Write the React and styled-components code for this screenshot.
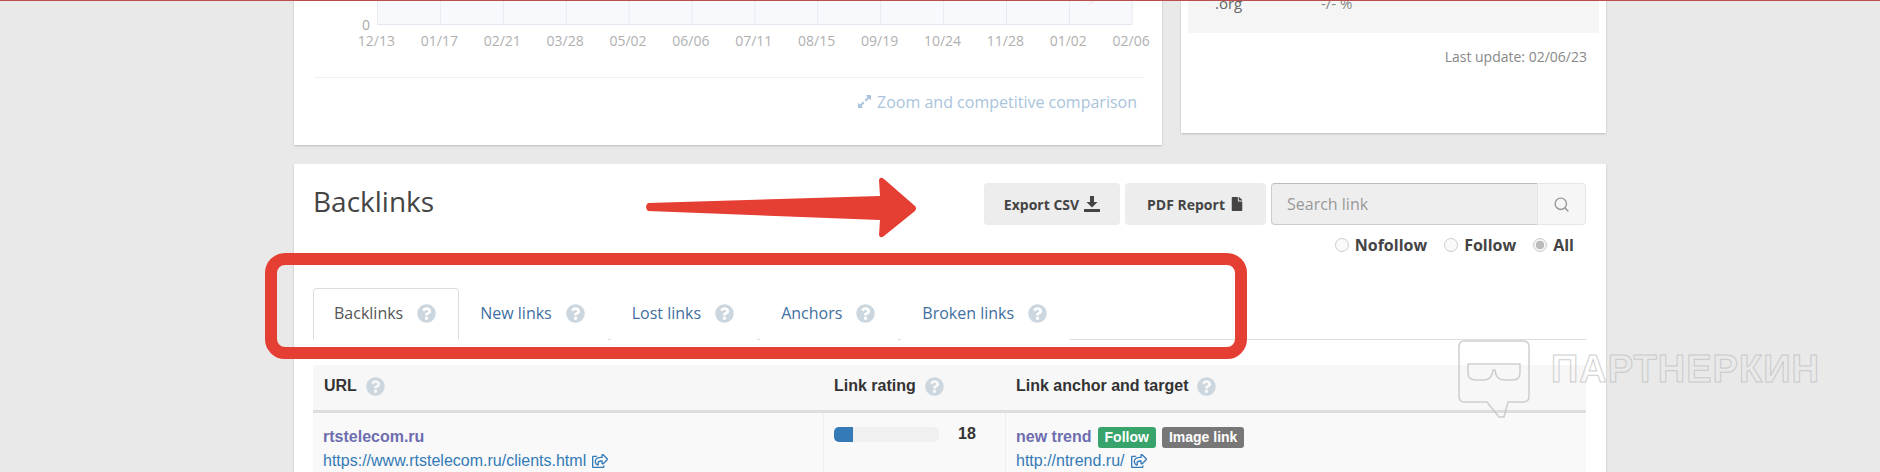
import React from 'react'
import styled, { createGlobalStyle } from 'styled-components'
import { FaQuestionCircle, FaRegShareSquare, FaFile, FaExpandAlt } from 'react-icons/fa'
import { Search } from 'lucide-react'

const GlobalStyle = createGlobalStyle`
    html, body {
        margin: 0;
        padding: 0;
        background: #e9e9e9;
    }
    * { box-sizing: border-box; }
`

const Page = styled.div`
    position: relative;
    width: 1880px;
    height: 472px;
    overflow: hidden;
    padding-left: 294px;
    font-family: "Open Sans", sans-serif;
`
const TopLine = styled.div`
    position: absolute;
    top: 0;
    left: 0;
    right: 0;
    height: 1px;
    background: #b95050;
`
const TopRow = styled.div`
    display: flex;
    align-items: flex-start;
    gap: 19px;
    width: 1312px;
    height: 164px;
`
const Card = styled.div`
    background: #fff;
    box-shadow: 0 1px 2px rgba(0, 0, 0, 0.2);
`
const ChartCard = styled(Card)`
    width: 868px;
    height: 145px;
    padding: 0 18px 0 20px;
`
const ChartRow = styled.div`
    display: flex;
    align-items: flex-end;
    height: 25px;
    padding-left: 48px;
`
const AxisZero = styled.span`
    width: 15px;
    font-size: 14px;
    line-height: 18px;
    margin-bottom: -9px;
    color: #aaa;
`
const DateRow = styled.div`
    display: flex;
    padding-left: 31px;
    margin-top: 6px;
`
const DateLabel = styled.span`
    flex: 0 0 62.9px;
    text-align: center;
    font-size: 14px;
    line-height: 20px;
    color: #b0b0b0;
    white-space: nowrap;
`
const ChartFooter = styled.div`
    display: flex;
    align-items: center;
    justify-content: flex-end;
    gap: 5px;
    height: 48px;
    margin-top: 26px;
    padding-right: 7px;
    border-top: 1px solid #f1f1f1;
    font-size: 16px;
    color: #a9c4dc;
`
const SideCard = styled(Card)`
    width: 425px;
    height: 133px;
    padding: 0 7px;
`
const ZoneBox = styled.div`
    display: flex;
    height: 33px;
    padding-left: 27px;
    overflow: hidden;
    background: #f5f5f5;
    font-size: 15px;
    line-height: 20px;
    color: #666;
`
const ZoneName = styled.span`
    width: 106px;
    margin-top: -7px;
`
const ZoneValue = styled.span`
    margin-top: -7px;
    color: #888;
`
const LastUpdate = styled.div`
    margin-top: 14px;
    padding-right: 12px;
    text-align: right;
    font-size: 14px;
    line-height: 20px;
    color: #888;
`
const MainCard = styled(Card)`
    width: 1312px;
    height: 320px;
    padding: 19px 20px 0 19px;
`
const Header = styled.div`
    display: flex;
    justify-content: space-between;
    height: 105px;
`
const Title = styled.h2`
    margin: 0;
    font-size: 28px;
    font-weight: 400;
    line-height: 36px;
    color: #444;
`
const Controls = styled.div`
    display: flex;
    flex-direction: column;
    align-items: flex-end;
`
const ButtonRow = styled.div`
    display: flex;
    gap: 5px;
`
const ActionButton = styled.button`
    display: flex;
    align-items: center;
    justify-content: center;
    gap: 5px;
    width: ${p => p.$width}px;
    height: 42px;
    padding: 0;
    border: 0;
    border-radius: 4px;
    background: #ededed;
    font-family: inherit;
    font-size: 14px;
    font-weight: 700;
    color: #444;
`
const SearchBox = styled.div`
    display: flex;
    height: 42px;
`
const SearchInput = styled.input`
    width: 266px;
    height: 42px;
    padding: 0 15px;
    border: 1px solid #ccc;
    border-top-color: #bbb;
    border-right: 0;
    border-radius: 4px 0 0 4px;
    background: #eee;
    font-family: inherit;
    font-size: 16px;
    &::placeholder { color: #999; opacity: 1; }
`
const SearchAddon = styled.div`
    display: flex;
    align-items: center;
    justify-content: center;
    width: 49px;
    border: 1px solid #e6e6e6;
    border-radius: 0 4px 4px 0;
    background: #f6f6f6;
    color: #999;
`
const RadioRow = styled.div`
    display: flex;
    gap: 17px;
    height: 24px;
    margin-top: 8px;
    padding-right: 12px;
`
const RadioLabel = styled.label`
    display: flex;
    align-items: center;
    gap: 6px;
    font-size: 16px;
    font-weight: 700;
    color: #444;
`
const Radio = styled.input.attrs({ type: 'radio' })`
    appearance: none;
    position: relative;
    width: 14px;
    height: 14px;
    margin: 0;
    border: 1px solid #ccc;
    border-radius: 50%;
    background: #fafafa;
    &:checked { background: radial-gradient(circle, #bbb 0 4px, #f4f4f4 4.5px); }
`
const Tabs = styled.div`
    display: flex;
    height: 52px;
    border-bottom: 1px solid #ddd;
`
const Tab = styled.div`
    display: flex;
    align-items: center;
    gap: 14px;
    height: 52px;
    padding: 0 22px 2px 20px;
    border: 1px solid ${p => (p.$active ? '#ddd' : 'transparent')};
    border-bottom-color: ${p => (p.$active ? '#fff' : 'transparent')};
    border-radius: 4px 4px 0 0;
    margin-right: ${p => (p.$active ? 0 : 3)}px;
    font-size: 16px;
    color: ${p => (p.$active ? '#555' : '#3f6f9f')};
    background: #fff;
`
const Help = styled(FaQuestionCircle)`
    flex: none;
    font-size: 19px;
    color: #ccd6de;
`
const Table = styled.div`
    margin-top: 25px;
    font-family: "Liberation Sans", Arial, sans-serif;
    font-size: 16px;
`
const TableRow = styled.div`
    display: grid;
    grid-template-columns: 510px 182px 581px;
`
const HeadCell = styled.div`
    display: flex;
    align-items: center;
    gap: 9px;
    height: 48px;
    padding: 0 11px 3px 11px;
    border-bottom: 3px solid #ddd;
    background: #f7f7f7;
    font-weight: 700;
    color: #333;
`
const BodyCell = styled.div`
    height: 70px;
    padding: 12px 10px 0 10px;
    background: #f9f9f9;
    border-left: ${p => (p.$first ? '0' : '1px solid #eee')};
`
const LinkTitle = styled.div`
    display: flex;
    align-items: center;
    gap: 6px;
    height: 24px;
    font-weight: 700;
    color: #6d6db0;
`
const LinkUrl = styled.div`
    display: flex;
    align-items: center;
    gap: 6px;
    height: 24px;
    color: #337ab7;
`
const RatingRow = styled.div`
    display: flex;
    align-items: center;
    gap: 19px;
    font-weight: 700;
    color: #333;
`
const RatingTrack = styled.div`
    width: 105px;
    height: 15px;
    overflow: hidden;
    border-radius: 5px;
    background: #f0f0f0;
`
const RatingFill = styled.div`
    height: 100%;
    background: #337ab7;
`
const Badge = styled.span`
    padding: 0 7px;
    height: 21px;
    border-radius: 3px;
    background: ${p => p.$color};
    font-size: 14px;
    line-height: 21px;
    color: #fff;
`
const Annotation = styled.svg`
    position: absolute;
    top: 0;
    left: 0;
    pointer-events: none;
`
const Watermark = styled.div`
    position: absolute;
    top: 340px;
    left: 1458px;
    display: flex;
    gap: 21px;
    pointer-events: none;
`
const WatermarkText = styled.span`
    margin-top: 7px;
    font-family: "Liberation Sans", Arial, sans-serif;
    font-size: 38px;
    font-weight: 700;
    line-height: 44px;
    letter-spacing: 1px;
    color: transparent;
    -webkit-text-stroke: 1px rgba(190, 190, 190, 0.75);
`

const dates = ['12/13', '01/17', '02/21', '03/28', '05/02', '06/06', '07/11', '08/15', '09/19', '10/24', '11/28', '01/02', '02/06']
const tabs = ['Backlinks', 'New links', 'Lost links', 'Anchors', 'Broken links']

const PlotArea = () => (
    <svg width="756" height="25" viewBox="0 0 756 25">
        <rect x="0" y="0" width="755" height="24" fill="#f8f9fc" />
        {dates.map((d, i) => (
            <line key={d} x1={i * 62.9 + 0.5} y1="0" x2={i * 62.9 + 0.5} y2="24" stroke="#e8eaf2" />
        ))}
        <line x1="0" y1="24.5" x2="755" y2="24.5" stroke="#e4e7f0" />
        <path d="M709 7 L714 0 L720 0 Z" fill="#f3eef2" />
    </svg>
)

const SaveIcon = () => (
    <svg width="16" height="16" viewBox="0 0 16 16" fill="#444">
        <path d="M6 0h4v6h3.5L8 11.5 2.500 6H6z" />
        <rect x="0" y="13" width="16" height="3" rx="0.5" />
    </svg>
)

const Arrow = () => (
    <Annotation width="1880" height="472" viewBox="0 0 1880 472">
        <path
            d="M648 203 L880 196 L879 180 Q880 176 884 179 L915 206 Q917 208 915 211 L884 236 Q880 239 879 235 L880 220 L648 211 Q644 207 648 203 Z"
            fill="#e53e32"
        />
        <rect x="271" y="259" width="970" height="94" rx="14" fill="none" stroke="#e53e32" strokeWidth="12" />
    </Annotation>
)

const App = () => {
    return (
        <Page>
            <GlobalStyle />
            <TopRow>
                <ChartCard>
                    <ChartRow>
                        <AxisZero>0</AxisZero>
                        <PlotArea />
                    </ChartRow>
                    <DateRow>
                        {dates.map(d => <DateLabel key={d}>{d}</DateLabel>)}
                    </DateRow>
                    <ChartFooter>
                        <FaExpandAlt size={15} />
                        Zoom and competitive comparison
                    </ChartFooter>
                </ChartCard>
                <SideCard>
                    <ZoneBox>
                        <ZoneName>.org</ZoneName>
                        <ZoneValue>-/- %</ZoneValue>
                    </ZoneBox>
                    <LastUpdate>Last update: 02/06/23</LastUpdate>
                </SideCard>
            </TopRow>
            <MainCard>
                <Header>
                    <Title>Backlinks</Title>
                    <Controls>
                        <ButtonRow>
                            <ActionButton $width={136}>Export CSV <SaveIcon /></ActionButton>
                            <ActionButton $width={141}>PDF Report <FaFile size={14} /></ActionButton>
                            <SearchBox>
                                <SearchInput placeholder="Search link" />
                                <SearchAddon><Search size={17} /></SearchAddon>
                            </SearchBox>
                        </ButtonRow>
                        <RadioRow>
                            <RadioLabel><Radio name="rel" />Nofollow</RadioLabel>
                            <RadioLabel><Radio name="rel" />Follow</RadioLabel>
                            <RadioLabel><Radio name="rel" defaultChecked />All</RadioLabel>
                        </RadioRow>
                    </Controls>
                </Header>
                <Tabs>
                    {tabs.map((t, i) => (
                        <Tab key={t} $active={i === 0}>
                            {t}
                            <Help />
                        </Tab>
                    ))}
                </Tabs>
                <Table>
                    <TableRow>
                        <HeadCell>URL <Help /></HeadCell>
                        <HeadCell>Link rating <Help /></HeadCell>
                        <HeadCell>Link anchor and target <Help /></HeadCell>
                    </TableRow>
                    <TableRow>
                        <BodyCell $first>
                            <LinkTitle>rtstelecom.ru</LinkTitle>
                            <LinkUrl>https://www.rtstelecom.ru/clients.html <FaRegShareSquare /></LinkUrl>
                        </BodyCell>
                        <BodyCell>
                            <RatingRow>
                                <RatingTrack><RatingFill style={{ width: '18%' }} /></RatingTrack>
                                18
                            </RatingRow>
                        </BodyCell>
                        <BodyCell>
                            <LinkTitle>
                                new trend
                                <Badge $color="#38a36a">Follow</Badge>
                                <Badge $color="#777">Image link</Badge>
                            </LinkTitle>
                            <LinkUrl>http://ntrend.ru/ <FaRegShareSquare /></LinkUrl>
                        </BodyCell>
                    </TableRow>
                </Table>
            </MainCard>
            <TopLine />
            <Arrow />
            <Watermark>
                <svg width="72" height="78" viewBox="0 0 72 78" fill="none" stroke="rgba(190,190,190,0.75)" strokeWidth="1.500">
                    <path d="M6 1 H65 Q71 1 71 7 V56 Q71 62 65 62 H50 L46 77 H41 L29 62 H6 Q1 62 1 56 V7 Q1 1 6 1 Z" />
                    <path d="M10 24 H62 V33 Q62 40 54 40 H46 Q38 40 37 30 H35 Q34 40 26 40 H18 Q10 40 10 33 Z" />
                </svg>
                <WatermarkText>ПАРТНЕРКИН</WatermarkText>
            </Watermark>
        </Page>
    )
}

export default App
